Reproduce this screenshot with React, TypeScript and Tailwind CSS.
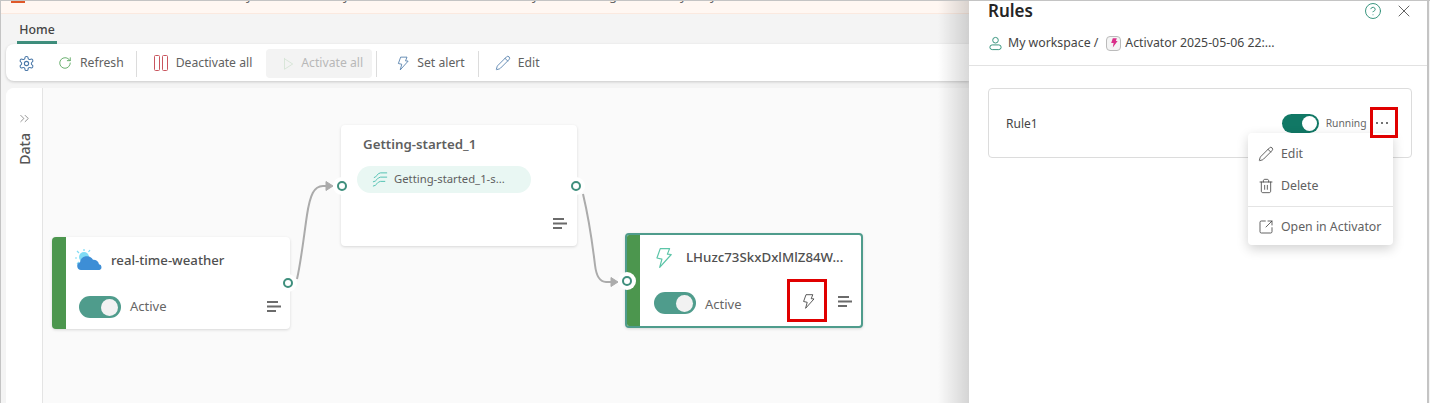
import React from "react"
import { LuSettings, LuRotateCw, LuPlay, LuPencil, LuTrash2, LuSquareArrowOutUpRight, LuChevronsRight, LuX, LuCircleHelp } from "react-icons/lu"

const font = "font-['Noto_Sans','Open_Sans',sans-serif]"

const Bolt = ({ className, color = "currentColor" }: { className?: string, color?: string }) => (
    <svg viewBox="0 0 20 20" fill="none" stroke={color} strokeWidth="1.1" strokeLinejoin="round" className={className}>
        <path d="M7.500 1.500h8.500l-2 5 3.500.3-10.500 11.700 2-7.500-4.500-1z" />
    </svg>
)

const Lines = ({ className }: { className?: string }) => (
    <svg viewBox="0 0 16 14" className={className} fill="#6b6b6b">
        <rect x="1" y="1" width="11" height="2" />
        <rect x="1" y="5.500" width="14" height="2" />
        <rect x="1" y="10" width="9" height="2" />
    </svg>
)

const Toggle = ({ dark }: { dark?: boolean }) => (
    <div className={`flex items-center justify-end rounded-full ${dark ? "w-[37px] h-[19px] bg-[#117865] px-[2px]" : "w-[42px] h-[22px] bg-[#4f9c8c] px-[3px]"}`}>
        <div className={`rounded-full ${dark ? "w-[15px] h-[15px] bg-white" : "w-[17px] h-[17px] bg-[#f2f2f2]"}`} />
    </div>
)

const Port = ({ className }: { className: string }) => (
    <div className={`absolute flex items-center justify-center w-[18px] h-[18px] rounded-full bg-white ${className}`}>
        <div className="w-[10px] h-[10px] rounded-full border-2 border-[#3f8f7d] bg-white" />
    </div>
)

const Divider = () => <div className="w-px h-[26px] bg-[#dcdcdc]" />

const ToolButton = ({ icon, label, className }: { icon: React.ReactNode, label: string, className?: string }) => (
    <div className={`flex items-center whitespace-nowrap text-[12.2px] text-[#616161] ${className || ""}`}>
        {icon}
        <span>{label}</span>
    </div>
)

const Toolbar = () => (
    <div className="flex items-center h-[37px] ml-[5px] pl-[12px] pt-[2px] bg-white rounded-l-lg shadow-[0_1px_3px_rgba(0,0,0,0.18)]">
        <LuSettings className="w-[17px] h-[17px] text-[#4a78a8]" strokeWidth={1.5} />
        <ToolButton className="ml-[23px] gap-[8px]" label="Refresh" icon={<LuRotateCw className="w-[14px] h-[14px] text-[#56a55c]" strokeWidth={1.5} />} />
        <div className="ml-[12px]"><Divider /></div>
        <ToolButton className="ml-[17px] gap-[8px]" label="Deactivate all" icon={
            <svg viewBox="0 0 14 16" className="w-[14px] h-[16px]" fill="none" stroke="#c9565f" strokeWidth="1">
                <rect x="0.500" y="0.500" width="5" height="15" rx="1" />
                <rect x="8.500" y="0.500" width="5" height="15" rx="1" />
            </svg>
        } />
        <ToolButton className="ml-[14px] w-[106px] h-[29px] pl-[15px] rounded bg-[#f3f3f3] !text-[#b8b8b8] gap-[6px]" label="Activate all" icon={<LuPlay className="w-[14px] h-[14px] text-[#cfe0cf]" strokeWidth={1.25} />} />
        <div className="ml-[4px]"><Divider /></div>
        <ToolButton className="ml-[18px] gap-[7px]" label="Set alert" icon={<Bolt className="w-[15px] h-[17px]" color="#4a78a8" />} />
        <div className="ml-[13px]"><Divider /></div>
        <ToolButton className="ml-[16px] gap-[7px]" label="Edit" icon={<LuPencil className="w-[16px] h-[16px] text-[#4a78a8]" strokeWidth={1.25} />} />
    </div>
)

const Edges = () => (
    <svg className="absolute left-0 top-0 w-[968px] h-[403px]" fill="none" stroke="#ababab" strokeWidth="2">
        <path d="M297 279 C301 262 304 235 307 215 C310 195 314 186 323 186 H328" />
        <path d="M326 181.500 L333 186 L326 190.500 Z" fill="#ababab" strokeWidth="1" />
        <path d="M583 194 C588 215 592 240 595 265 Q597 282 606 282 H612" />
        <path d="M611 277.500 L618 282 L611 286.500 Z" fill="#ababab" strokeWidth="1" />
    </svg>
)

const Canvas = () => (
    <div className="flex flex-1 ml-[5px] mt-[7px] bg-[#fafafa] rounded-tl-lg">
        <div className="flex flex-col items-center w-[37px] pt-[23px] bg-white border-r border-[#e4e4e4] rounded-tl-lg">
            <LuChevronsRight className="w-[15px] h-[15px] text-[#777]" strokeWidth={1.25} />
            <span className="mt-[7px] ml-[1px] text-[14px] leading-[20px] font-medium text-[#555] [writing-mode:vertical-rl] rotate-180">Data</span>
        </div>
    </div>
)

const Nodes = () => (
    <>
        {/* source */}
        <div className="absolute left-[52px] top-[237px] w-[238px] h-[92px] bg-white rounded shadow-[0_1px_3px_rgba(0,0,0,0.14)] overflow-hidden border-l-[14px] border-[#4c964e]">
            <div className="flex items-center mt-[10px] ml-[9px] h-[28px]">
                <svg viewBox="0 0 28 24" className="w-[28px] h-[24px]">
                    <circle cx="9" cy="8" r="5" fill="#7fdcf5" />
                    <g stroke="#7fdcf5" strokeWidth="1.2">
                        <path d="M9 0v2M2 2l2 2M0 9h2M2 15l2-2M15 1l-1.500 2" />
                    </g>
                    <path d="M6 21a4 4 0 0 1-1-7.800 7 7 0 0 1 13-2.500 5.500 5.500 0 0 1 6 4.500 3 3 0 0 1 .5 5.800z" fill="#3d8ed6" />
                </svg>
                <span className="ml-[8px] text-[13.2px] font-medium text-[#505050]">real-time-weather</span>
            </div>
            <div className="flex items-center mt-[21px] ml-[13px]">
                <Toggle />
                <span className="ml-[9px] text-[13px] text-[#666]">Active</span>
                <Lines className="ml-[99px] w-[16px] h-[14px]" />
            </div>
        </div>
        <Port className="left-[279px] top-[274px]" />

        {/* stream */}
        <div className="absolute left-[341px] top-[125px] w-[236px] h-[121px] bg-white rounded shadow-[0_1px_3px_rgba(0,0,0,0.14)]">
            <div className="mt-[9px] ml-[22px] text-[13.3px] leading-[20px] font-semibold text-[#5f5f5f]">Getting-started_1</div>
            <div className="flex items-center mt-[12px] ml-[16px] w-[174px] h-[27px] pl-[15px] rounded-full bg-[#e9f7f3]">
                <svg viewBox="0 0 18 18" className="w-[17px] h-[17px]" fill="none" stroke="#4dbfb0" strokeWidth="1">
                    <path d="M2 7c3 0 3.500-5 7-5h7M1 11.500c4 0 4.500-5 8-5h7M1 16c4 0 4.500-5 8-5h5" />
                </svg>
                <span className="ml-[5px] text-[11.3px] text-[#5f5f5f]">Getting-started_1-s...</span>
            </div>
            <Lines className="absolute right-[9px] bottom-[15px] w-[16px] h-[14px]" />
        </div>
        <Port className="left-[333px] top-[177px]" />
        <Port className="left-[567px] top-[177px]" />

        {/* activator */}
        <div className="absolute left-[625px] top-[233px] w-[238px] h-[95px] bg-white rounded border-2 border-[#4f9c8c] overflow-hidden shadow-[0_1px_3px_rgba(0,0,0,0.14)]">
            <div className="absolute left-0 top-0 bottom-0 w-[13px] bg-[#4c964e]" />
            <Bolt className="absolute left-[25px] top-[10px] w-[22px] h-[26px]" color="#5cc5a8" />
            <span className="absolute left-[59px] top-[13px] text-[13.3px] font-medium text-[#505050]">LHuzc73SkxDxlMlZ84W...</span>
            <div className="absolute left-[27px] top-[57px]"><Toggle /></div>
            <span className="absolute left-[78px] top-[60px] text-[13px] text-[#666]">Active</span>
            <Bolt className="absolute left-[173px] top-[58px] w-[16px] h-[17px]" color="#444" />
            <Lines className="absolute left-[210px] top-[60px] w-[16px] h-[14px]" />
        </div>
        <Port className="left-[618px] top-[272px]" />
        <div className="absolute left-[787px] top-[279px] w-[40px] h-[43px] border-[3px] border-[#e00000]" />
    </>
)

const Panel = () => (
    <div className="relative flex flex-col w-[460px] h-full bg-white border-r-2 border-[#c4c4c4]">
        <div className="flex items-start justify-between h-[65px] pl-[19px] pr-[13px] border-b border-[#e2e2e2]">
            <div>
                <div className="text-[17px] leading-[20px] font-semibold text-[#252525]">Rules</div>
                <div className="flex items-center mt-[13px] text-[12.3px] text-[#444]">
                    <svg viewBox="0 0 16 16" className="w-[15px] h-[15px]" fill="none" stroke="#2f8f78" strokeWidth="1">
                        <circle cx="8" cy="4.500" r="3" />
                        <rect x="2" y="9.500" width="12" height="5" rx="2.500" />
                    </svg>
                    <span className="ml-[5px]">My workspace /</span>
                    <div className="flex items-center justify-center ml-[8px] w-[15px] h-[15px] rounded-sm bg-[#f4f4f4] border border-[#bbb]">
                        <svg viewBox="0 0 10 12" className="w-[8px] h-[10px]"><path d="M3.500 0h5l-1.200 3.500h2.200l-6 8 1-5.500h-3z" fill="#d92f8a" /></svg>
                    </div>
                    <span className="ml-[4px]">Activator 2025-05-06 22:...</span>
                </div>
            </div>
            <div className="flex items-center gap-[12px]">
                <LuCircleHelp className="w-[18px] h-[18px] text-[#2f8f78]" strokeWidth={1.25} />
                <LuX className="w-[20px] h-[20px] text-[#555]" strokeWidth={1.1} />
            </div>
        </div>
        <div className="flex items-center mt-[22px] ml-[19px] w-[424px] h-[70px] pl-[17px] border border-[#dcdcdc] rounded">
            <span className="pt-[2px] text-[12px] text-[#444]">Rule1</span>
            <div className="ml-auto flex items-center">
                <Toggle dark />
                <span className="ml-[7px] pt-[2px] text-[10.3px] text-[#666]">Running</span>
                <div className="flex gap-[2.5px] ml-[9px] mr-[23px]">
                    <div className="w-[2.500px] h-[2.500px] rounded-full bg-[#444]" />
                    <div className="w-[2.500px] h-[2.500px] rounded-full bg-[#444]" />
                    <div className="w-[2.500px] h-[2.500px] rounded-full bg-[#444]" />
                </div>
            </div>
        </div>
        <div className="absolute left-[279px] top-[132px] w-[145px] pt-[5px] pb-[2px] bg-white rounded shadow-[0_4px_12px_rgba(0,0,0,0.18)] text-[12.3px] text-[#616161]">
            <div className="flex items-center h-[32px] pl-[10px] gap-[7px]"><LuPencil className="w-[16px] h-[16px] text-[#444]" strokeWidth={1.25} />Edit</div>
            <div className="flex items-center h-[32px] pl-[10px] gap-[7px]"><LuTrash2 className="w-[16px] h-[16px] text-[#444]" strokeWidth={1.25} />Delete</div>
            <div className="my-[4px] h-px bg-[#e4e4e4]" />
            <div className="flex items-center h-[32px] pl-[10px] gap-[7px]"><LuSquareArrowOutUpRight className="w-[16px] h-[16px] text-[#444]" strokeWidth={1.25} />Open in Activator</div>
        </div>
        <div className="absolute left-[401px] top-[106px] w-[28px] h-[31px] border-[3px] border-[#e00000]" />
    </div>
)

// only the descenders of the clipped banner line show
const Banner = () => (
    <div className="relative h-[13px] overflow-hidden bg-[#fff7f2] border-b border-[#fbe9df] text-[13px] leading-[13px] text-[#666]">
        <div className="absolute left-[10px] top-0 w-[14px] h-[2px] bg-[#e0592a]" />
        <span className="absolute left-[245px] -top-[12px]">y</span>
        <span className="absolute left-[342px] -top-[12px]">y</span>
        <span className="absolute left-[531px] -top-[12px]">y</span>
        <span className="absolute left-[608px] -top-[12px]">g</span>
        <span className="absolute left-[679px] -top-[12px]">y</span>
        <span className="absolute left-[709px] -top-[12px]">y</span>
    </div>
)

const App = () => (
    <div className={`relative flex w-[1430px] h-[403px] overflow-hidden border-t border-l border-[#c4c4c4] bg-[#f4f4f4] ${font}`}>
        <div className="flex flex-col w-[968px] h-full shrink-0">
            <Banner />
            <div className="flex items-end h-[30px] pl-[16px]">
                <div className="flex items-center justify-center w-[40px] h-[26px] pt-[2px] text-[12.3px] font-medium text-[#444] border-b-[3px] border-[#3f8f7d]">Home</div>
            </div>
            <Toolbar />
            <Canvas />
        </div>
        <Panel />
        <div className="absolute left-[937px] top-0 w-[31px] h-full bg-gradient-to-r from-transparent to-black/15 pointer-events-none" />
        <div className="absolute -left-px -top-[1px] w-[1430px] h-[403px] pointer-events-none">
            <Edges />
            <Nodes />
        </div>
    </div>
)

export default App
